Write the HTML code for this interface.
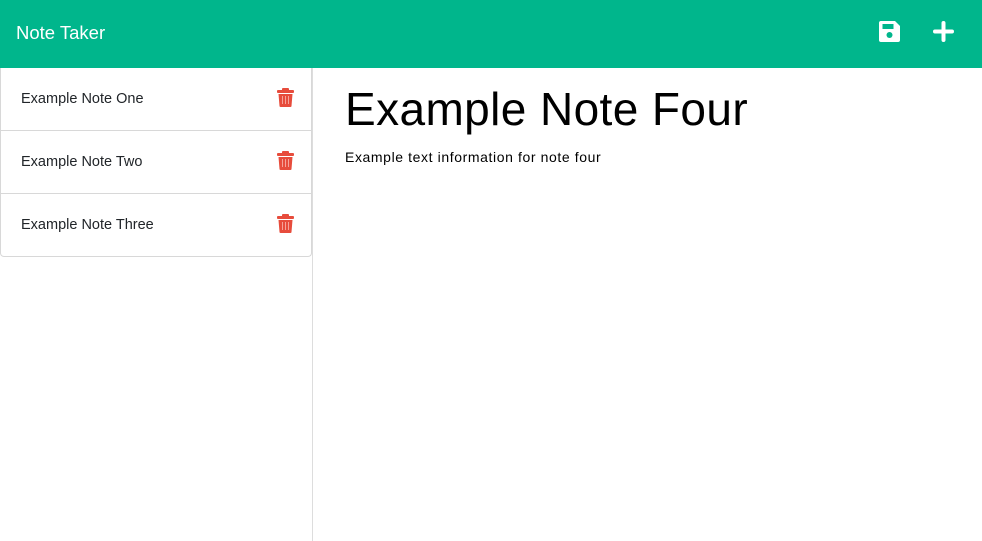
<!DOCTYPE html>
<html><head><style>
*{margin:0;padding:0;box-sizing:border-box}
body{width:982px;height:541px;overflow:hidden;background:#fff;font-family:"Liberation Sans",sans-serif;color:#212529}
.hdr{height:68px;background:#00b68c;position:relative}
.hdr .t{position:absolute;left:16px;top:22px;color:#fff;font-size:18.5px}
.side{position:absolute;left:0;top:68px;width:313px;height:473px;border-right:1px solid #ddd}
.item{height:63px;border:1px solid #d8d8d8;border-top:none;position:relative;font-size:14.5px}
.item span{position:absolute;left:20px;top:23px}
.item svg{position:absolute;left:276px;top:20px}
.last{border-radius:0 0 4px 4px}
h1{position:absolute;left:345px;top:82px;font-weight:400;font-size:46px;letter-spacing:0.4px;color:#000}
p{position:absolute;left:345px;top:149px;font-size:14px;letter-spacing:0.6px;color:#000}
</style></head><body>
<div class="hdr"><div class="t">Note Taker</div>
<svg style="position:absolute;left:879px;top:21px" width="21" height="21" viewBox="0 0 21 21"><path d="M2 0h14l5 5v14a2 2 0 0 1-2 2H2a2 2 0 0 1-2-2V2a2 2 0 0 1 2-2z" fill="#fff"/><rect x="3.5" y="3" width="11" height="5" fill="#00b68c"/><circle cx="10.5" cy="14" r="3" fill="#00b68c"/></svg>
<svg style="position:absolute;left:933px;top:21px" width="21" height="21" viewBox="0 0 21 21"><path d="M10.5 2v17M2 10.5h17" stroke="#fff" stroke-width="4" stroke-linecap="round"/></svg>
</div>
<div class="side">
<div class="item"><span>Example Note One</span><svg width="17" height="19" viewBox="0 0 17 19"><rect x="0" y="2" width="17" height="3" rx="1" fill="#e74c3c"/><rect x="5" y="0" width="7" height="3" rx="1" fill="#e74c3c"/><path d="M1.5 6h14l-1 12a1 1 0 0 1-1 1h-10a1 1 0 0 1-1-1z" fill="#e74c3c"/><path d="M5.5 8v8M8.5 8v8M11.5 8v8" stroke="#f5a39a" stroke-width="1"/></svg></div>
<div class="item"><span>Example Note Two</span><svg width="17" height="19" viewBox="0 0 17 19"><rect x="0" y="2" width="17" height="3" rx="1" fill="#e74c3c"/><rect x="5" y="0" width="7" height="3" rx="1" fill="#e74c3c"/><path d="M1.5 6h14l-1 12a1 1 0 0 1-1 1h-10a1 1 0 0 1-1-1z" fill="#e74c3c"/><path d="M5.5 8v8M8.5 8v8M11.5 8v8" stroke="#f5a39a" stroke-width="1"/></svg></div>
<div class="item last"><span>Example Note Three</span><svg width="17" height="19" viewBox="0 0 17 19"><rect x="0" y="2" width="17" height="3" rx="1" fill="#e74c3c"/><rect x="5" y="0" width="7" height="3" rx="1" fill="#e74c3c"/><path d="M1.5 6h14l-1 12a1 1 0 0 1-1 1h-10a1 1 0 0 1-1-1z" fill="#e74c3c"/><path d="M5.5 8v8M8.5 8v8M11.5 8v8" stroke="#f5a39a" stroke-width="1"/></svg></div>
</div>
<h1>Example Note Four</h1>
<p>Example text information for note four</p>
</body></html>
